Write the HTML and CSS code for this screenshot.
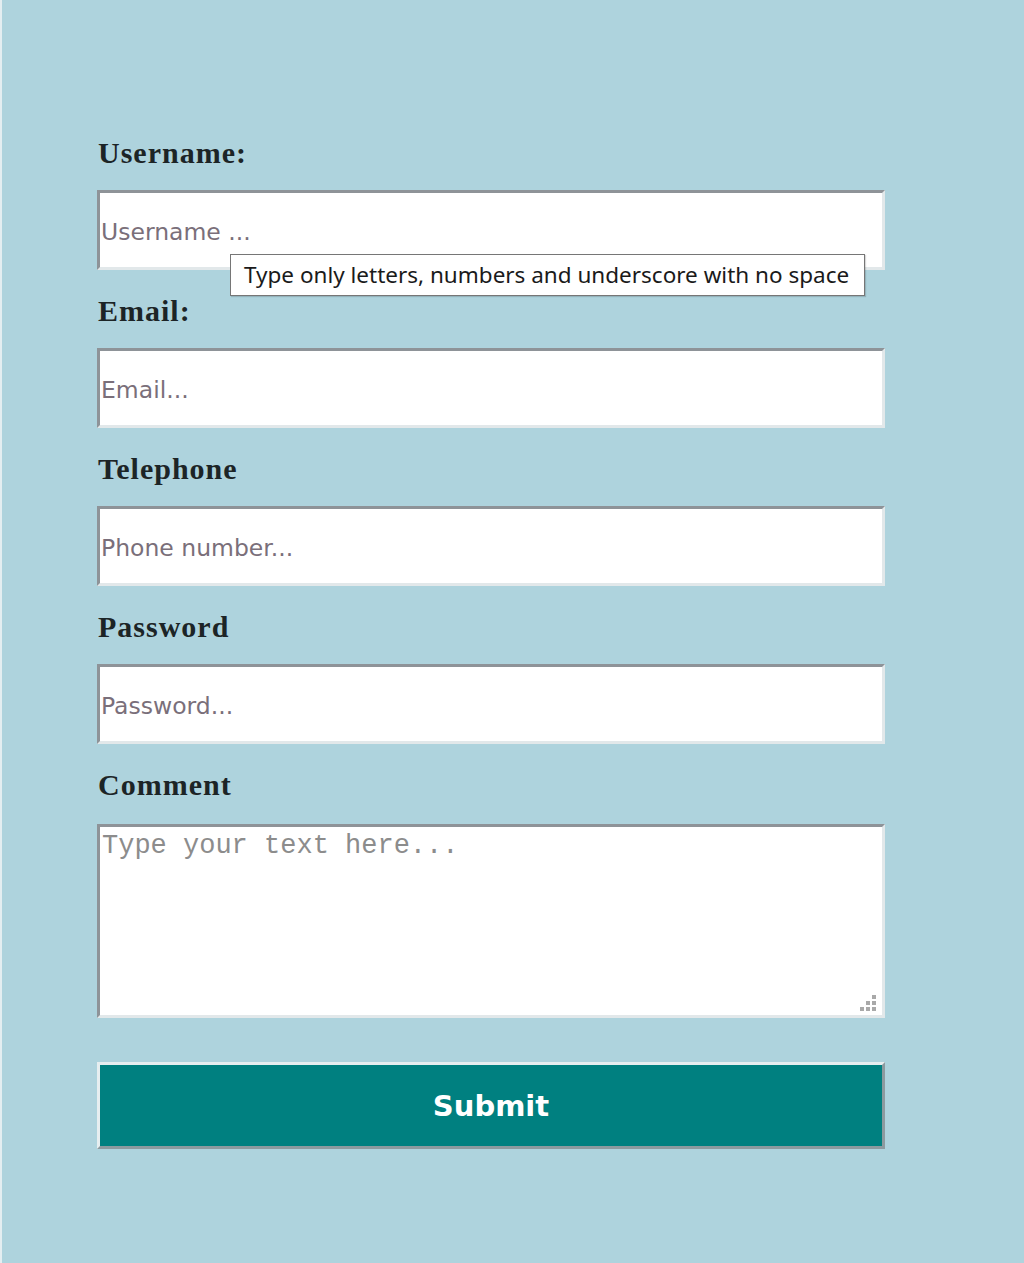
FILE: index.html
```html
<!DOCTYPE html>
<html>
<head>
<meta charset="utf-8">
<title>Form</title>
<link rel="stylesheet" href="styles.css">
</head>
<body>
<div class="page">
  <form class="form">
    <div class="field">
      <label class="label" for="u">Username:</label>
      <input class="input" id="u" type="text" placeholder="Username ...">
      <div class="tooltip">Type only letters, numbers and underscore with no space</div>
    </div>
    <div class="field">
      <label class="label" for="e">Email:</label>
      <input class="input" id="e" type="text" placeholder="Email...">
    </div>
    <div class="field">
      <label class="label" for="t">Telephone</label>
      <input class="input" id="t" type="text" placeholder="Phone number...">
    </div>
    <div class="field">
      <label class="label" for="p">Password</label>
      <input class="input" id="p" type="text" placeholder="Password...">
    </div>
    <div class="field">
      <label class="label comment-label" for="c">Comment</label>
      <textarea class="textarea" id="c" placeholder="Type your text here..."></textarea>
      <span class="grip">
        <svg width="17" height="17" viewBox="0 0 17 17">
          <rect x="13" y="0" width="4" height="4" fill="#a9a9a9"/>
          <rect x="7" y="6" width="4" height="4" fill="#a9a9a9"/>
          <rect x="13" y="6" width="4" height="4" fill="#a9a9a9"/>
          <rect x="1" y="12" width="4" height="4" fill="#a9a9a9"/>
          <rect x="7" y="12" width="4" height="4" fill="#a9a9a9"/>
          <rect x="13" y="12" width="4" height="4" fill="#a9a9a9"/>
        </svg>
      </span>
    </div>
    <button class="submit" type="button">Submit</button>
  </form>
</div>
</body>
</html>
```

FILE: styles.css
```css
html, body {
  margin: 0;
  padding: 0;
  background: #aed3dd;
}
.page {
  min-height: 1263px;
  box-sizing: border-box;
  border-left: 2px solid #e4eef1;
  background: #aed3dd;
  padding: 136px 0 0 95px;
}
.form {
  width: 788px;
  display: flex;
  flex-direction: column;
}
.field {
  position: relative;
  display: flex;
  flex-direction: column;
  margin-bottom: 24px;
}
.label {
  font-family: "Liberation Serif", "Times New Roman", serif;
  font-weight: bold;
  font-size: 30px;
  line-height: 34px;
  letter-spacing: 1px;
  color: #1c2426;
  margin: 0 0 20px 1px;
}
.comment-label {
  margin-bottom: 22px;
}
.input, .textarea {
  box-sizing: border-box;
  width: 788px;
  height: 80px;
  margin: 0;
  padding: 3px 0 0 1px;
  background: #fff;
  border-style: solid;
  border-width: 3px;
  border-color: #8e9398 #e2e8ea #e2e8ea #8e9398;
  font-family: "DejaVu Sans", Verdana, sans-serif;
  font-size: 23.5px;
  color: #333;
  outline: none;
}
.input::placeholder {
  color: #7a6f7a;
  opacity: 1;
}
.textarea {
  display: block;
  height: 194px;
  padding: 3px 2px;
  font-family: "Liberation Mono", "Courier New", monospace;
  font-size: 27px;
  line-height: 32px;
  resize: none;
}
.textarea::placeholder {
  color: #8c8c8c;
  opacity: 1;
}
.grip {
  position: absolute;
  right: 9px;
  bottom: 6px;
  width: 17px;
  height: 17px;
  display: block;
  line-height: 0;
}
.tooltip {
  position: absolute;
  left: 133px;
  top: 118px;
  width: 635px;
  height: 42px;
  box-sizing: border-box;
  background: #fff;
  border: 1px solid #767676;
  font-family: "Noto Sans", "Open Sans", sans-serif;
  font-size: 22.5px;
  line-height: 40px;
  color: #1a1a1a;
  padding-left: 13px;
  white-space: nowrap;
  box-shadow: 1px 1px 1px rgba(0,0,0,0.15);
}
.submit {
  margin-top: 20px;
  box-sizing: border-box;
  width: 788px;
  height: 87px;
  background: #008080;
  border-style: solid;
  border-width: 3px;
  border-color: #e6eef0 #8c9a9f #8c9a9f #e6eef0;
  color: #fff;
  font-family: "DejaVu Sans", Verdana, sans-serif;
  font-weight: bold;
  font-size: 29px;
  padding: 0;
}
```
